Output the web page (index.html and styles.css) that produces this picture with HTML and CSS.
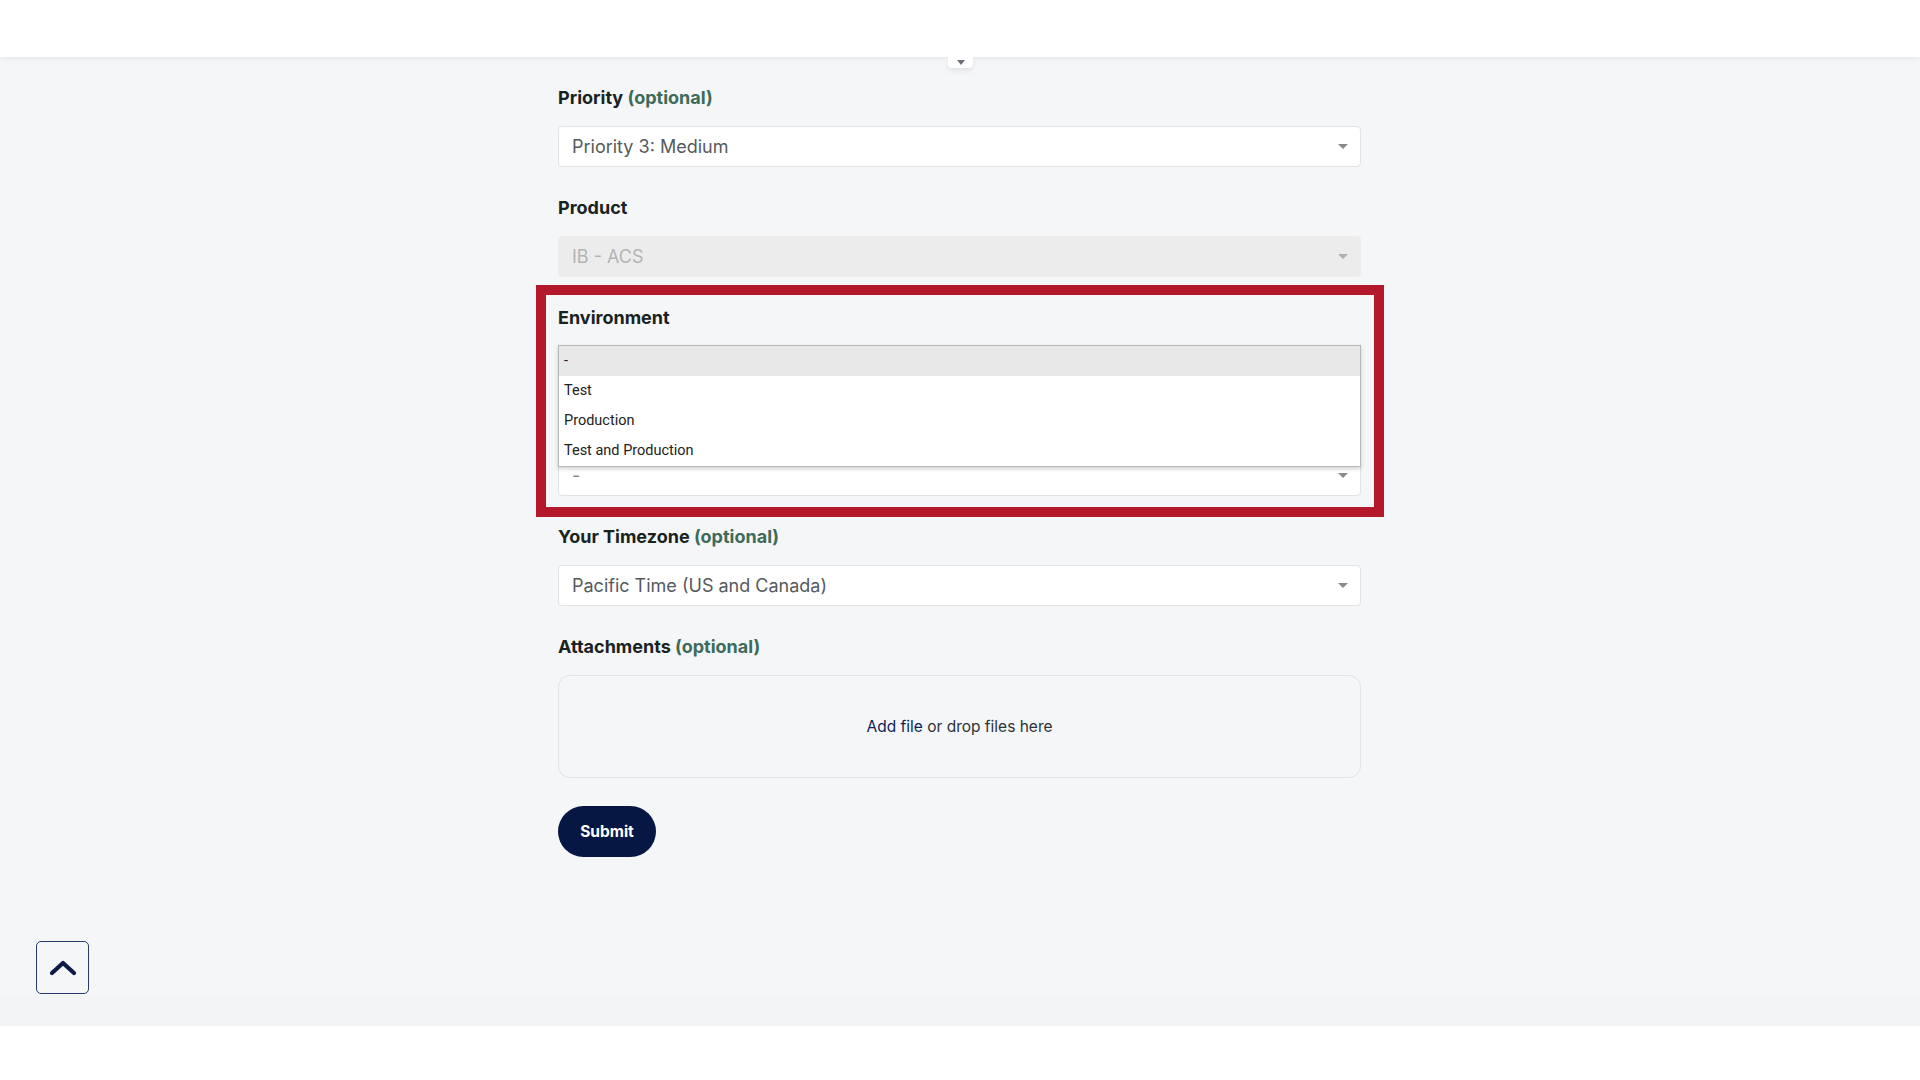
FILE: index.html
```html
<!DOCTYPE html>
<html lang="en">
<head>
  <meta charset="UTF-8" />
  <meta name="viewport" content="width=device-width, initial-scale=1.0"/>
  <title>Submit a request</title>
  <link rel="stylesheet" href="styles.css">
</head>
<body>
  <header class="topbar">
    <div class="topbar-tab"><span class="tab-caret"></span></div>
  </header>

  <main class="page">
    <form class="request-form">
      <div class="field">
        <label class="field-label">Priority <span class="optional">(optional)</span></label>
        <div class="select-wrap">
          <select class="select">
            <option>Priority 3: Medium</option>
          </select>
        </div>
      </div>

      <div class="field">
        <label class="field-label">Product</label>
        <div class="select-wrap">
          <select class="select" disabled>
            <option>IB - ACS</option>
          </select>
        </div>
      </div>

      <div class="field field-highlight">
        <label class="field-label">Environment</label>
        <div class="env-control">
          <ul class="listbox">
            <li class="listbox-item active">-</li>
            <li class="listbox-item">Test</li>
            <li class="listbox-item">Production</li>
            <li class="listbox-item">Test and Production</li>
          </ul>
          <div class="select-wrap env-select">
            <select class="select">
              <option>-</option>
            </select>
          </div>
        </div>
      </div>

      <div class="field">
        <label class="field-label">Your Timezone <span class="optional">(optional)</span></label>
        <div class="select-wrap">
          <select class="select">
            <option>Pacific Time (US and Canada)</option>
          </select>
        </div>
      </div>

      <div class="field">
        <label class="field-label">Attachments <span class="optional">(optional)</span></label>
        <div class="dropzone">
          <a href="#" class="add-file">Add file</a>&nbsp;or drop files here
        </div>
      </div>

      <button type="button" class="submit">Submit</button>
    </form>
  </main>

  <div class="footer-band"></div>

  <button class="back-to-top" aria-label="Back to top">
    <svg width="28" height="16" viewBox="0 0 28 16">
      <polyline points="3,13 14,3 25,13" fill="none" stroke="#0b1a47" stroke-width="4.2" stroke-linecap="round" stroke-linejoin="round"/>
    </svg>
  </button>
</body>
</html>
```

FILE: styles.css
```css
body { margin: 0; background: #fff; font-family: Inter, "Noto Sans", sans-serif; color: #1a2420; }

.topbar { height: 57px; background: #fff; position: relative; z-index: 3; box-shadow: 0 1px 6px rgba(0,0,0,0.08); }
.topbar-tab { position: absolute; left: 948px; top: 57px; width: 25px; height: 11px; background: #fff; border-radius: 0 0 4px 4px; box-shadow: 0 3px 5px rgba(0,0,0,0.08); display: flex; justify-content: center; padding-top: 3px; box-sizing: border-box; }
.tab-caret { width: 0; height: 0; border-left: 4px solid transparent; border-right: 4px solid transparent; border-top: 5px solid #6b7079; }

.page { background: #f5f6f8; height: 939px; padding-top: 29px; box-sizing: border-box; }
.request-form { width: 803px; margin-left: 558px; }

.field { margin-bottom: 29px; position: relative; }
.field-label { display: block; font-size: 18px; font-weight: 700; line-height: 24px; color: #18221e; margin-bottom: 16px; }
.optional { color: #3d6b59; }

.select-wrap { position: relative; }
.select-wrap::after { content: ""; position: absolute; right: 13px; top: 18px; border-left: 5px solid transparent; border-right: 5px solid transparent; border-top: 5px solid #8a8a8a; pointer-events: none; }
.select { appearance: none; -webkit-appearance: none; display: block; width: 100%; height: 41px; padding: 0 13px; border: 1px solid #e0e2e4; border-radius: 4px; background: #fff; font-family: Inter, sans-serif; font-size: 18px; color: #555a5e; }
.select:disabled { background: #ececec; color: #b4b4b4; border-color: #ececec; opacity: 1; }
.select-wrap:has(.select:disabled)::after { border-top-color: #b0b0b0; }

.field-highlight::after { content: ""; position: absolute; inset: -21px -23px -21px -22px; border: 10px solid #b3192b; pointer-events: none; }
.field-highlight .field-label { margin-bottom: 15px; }

.env-control { position: relative; }
.listbox { position: relative; z-index: 2; list-style: none; margin: 0; padding: 0; background: #fff; border: 1px solid #b8b8b8; box-shadow: 0 2px 4px rgba(0,0,0,0.18); font-family: Roboto, "Liberation Sans", sans-serif; font-size: 14.5px; color: #222; }
.listbox-item { height: 30px; line-height: 30px; padding-left: 5px; }
.listbox-item.active { background: #e8e8e8; }
.env-select { margin-top: -12px; }
.env-select .select { color: #888; }

.dropzone { height: 103px; border: 1px solid #e1e3e6; border-radius: 12px; display: flex; align-items: center; justify-content: center; font-size: 15.5px; color: #2c3336; box-sizing: border-box; }
.add-file { color: #0b1f5c; text-decoration: none; }

.submit { margin-top: -1px; width: 98px; height: 51px; border: none; border-radius: 26px; background: #061744; color: #fff; font-family: Inter, sans-serif; font-size: 15.5px; font-weight: 700; cursor: pointer; }

.footer-band { position: absolute; top: 996px; left: 0; right: 0; height: 30px; background: #f3f4f6; }

.back-to-top { position: fixed; left: 36px; top: 941px; z-index: 5; width: 53px; height: 53px; display: flex; align-items: center; justify-content: center; background: #f5f6f8; border: 1.5px solid #283a6c; border-radius: 5px; padding: 0; cursor: pointer; }
```
